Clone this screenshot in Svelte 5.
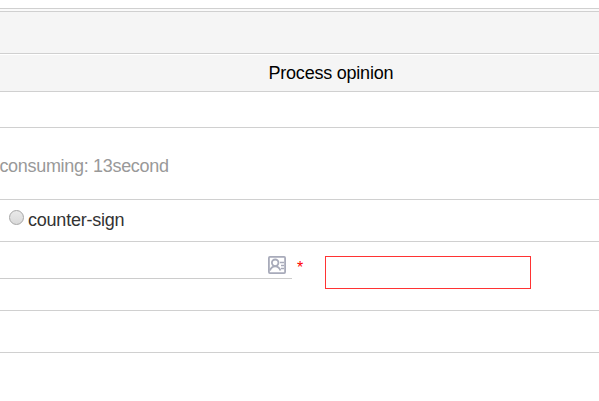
<script>
  let opinion = $state('');
</script>

<main class="form">
  <div class="row top"></div>
  <div class="row divider"></div>
  <div class="row band"></div>
  <div class="row heading"><span>Process opinion</span></div>
  <div class="row spacer"></div>
  <div class="row duration"><span>consuming: 13second</span></div>
  <div class="row choice">
    <i class="radio"></i>
    <span>counter-sign</span>
  </div>
  <div class="row entry">
    <div class="person">
      <svg width="18" height="18" viewBox="0 0 18 18" fill="none" stroke="#a8abba" stroke-width="1.8">
        <rect x="0.9" y="0.9" width="16.2" height="16.2" rx="1" />
        <circle cx="7.2" cy="6.8" r="3.3" />
        <path d="M2 14.6C2.8 11.8 4.6 10.3 7.2 10.3S11.6 11.8 12.4 14.6" />
        <path d="M12 6.5h4M13 9.5h3M13 12.5h3" stroke-width="1.4" />
      </svg>
    </div>
    <span class="required">*</span>
    <input class="opinion" bind:value={opinion} aria-label="Process opinion" />
  </div>
  <div class="row last"></div>
</main>

<style>
  :global(body) {
    margin: 0;
    background: #fff;
  }
  .form {
    width: 599px;
    height: 401px;
    overflow: hidden;
    font: 18px/20px "Liberation Sans", Arial, sans-serif;
    color: #333;
  }
  .row {
    box-sizing: border-box;
    display: flex;
    border-bottom: 1px solid #d0d0d0;
    white-space: nowrap;
  }
  .top { height: 9px; }
  .divider { height: 3px; background: #fafafa; }
  .band { height: 42px; background: #f5f5f5; }
  .heading {
    height: 38px;
    padding: 8px 0 0 268.5px;
    border-top: 1px solid #fff;
    background: #f5f5f5;
    color: #000;
    letter-spacing: -0.22px;
  }
  .spacer { height: 36px; }
  .duration {
    height: 72px;
    padding-top: 28px;
    color: #999;
    letter-spacing: -0.31px;
  }
  .duration span { margin-left: -0.6px; }
  .choice {
    height: 42px;
    padding: 10px 0 0 9px;
    letter-spacing: -0.22px;
  }
  .radio {
    box-sizing: border-box;
    width: 15px;
    height: 15px;
    margin-right: 4px;
    border: 1px solid #a6a6a6;
    border-radius: 50%;
    background: linear-gradient(#e9e9e9, #dadada);
  }
  .entry {
    height: 69px;
    align-items: flex-start;
  }
  .person {
    box-sizing: border-box;
    display: flex;
    justify-content: flex-end;
    width: 292px;
    height: 37px;
    padding: 14px 6px 0 0;
    border-bottom: 1px solid #ccc;
  }
  .required {
    width: 28px;
    margin: 16px 0 0 5px;
    font-size: 16px;
    line-height: 20px;
    color: #f00;
  }
  .opinion {
    box-sizing: border-box;
    width: 206px;
    height: 33px;
    margin: 14px 0 0;
    padding: 0 6px;
    border: 1px solid #f33;
    border-radius: 0;
    background: #fff;
    font: inherit;
    outline: none;
  }
  .last { height: 42px; }
</style>
